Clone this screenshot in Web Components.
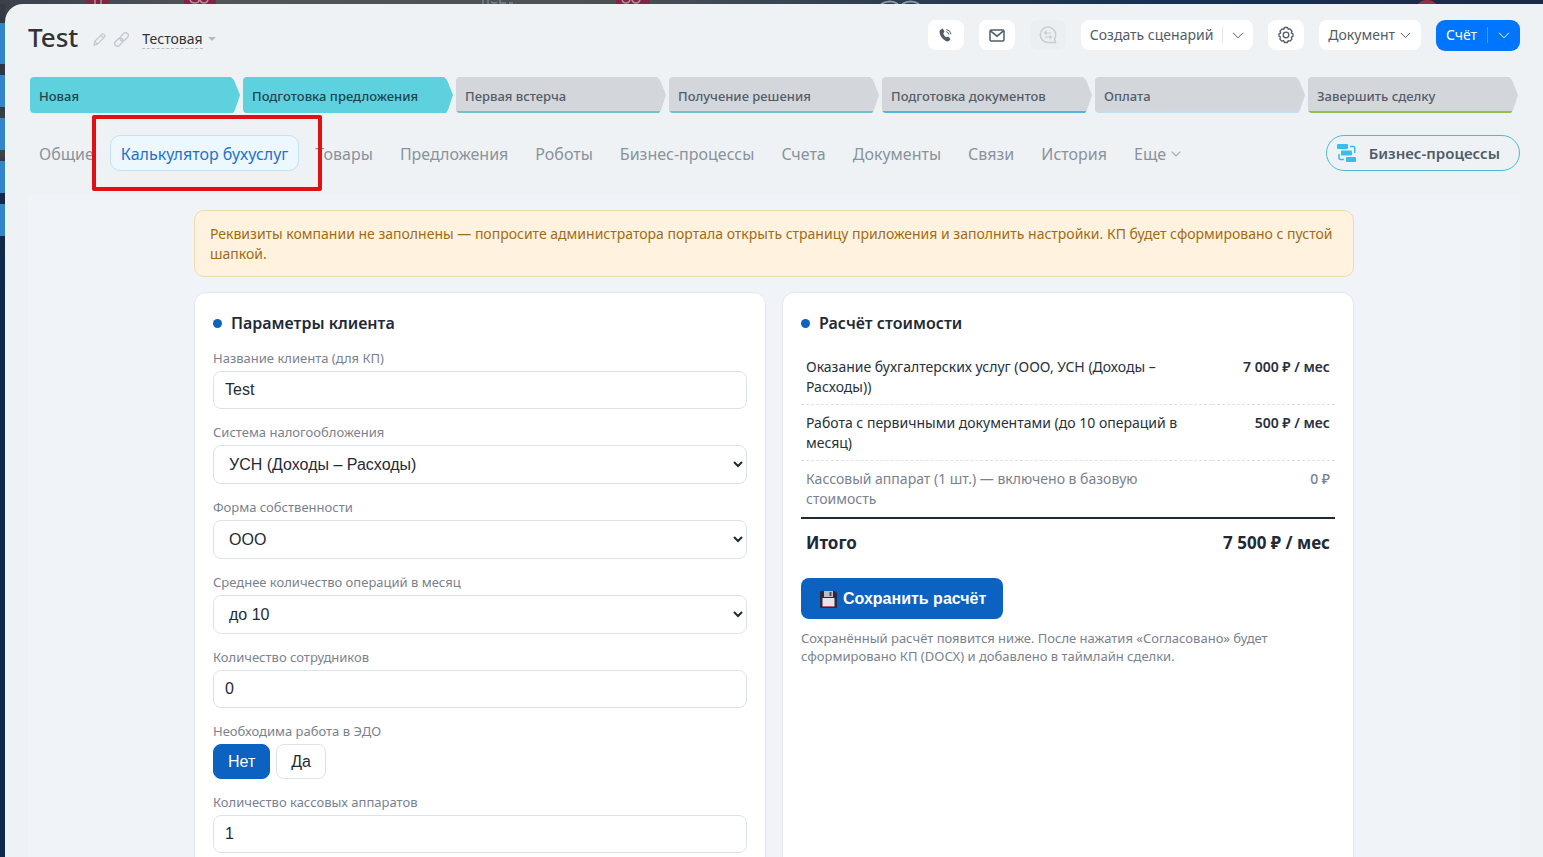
<!DOCTYPE html>
<html lang="ru">
<head>
<meta charset="utf-8">
<meta name="viewport" content="width=device-width, initial-scale=1">
<title>Test — Калькулятор бухуслуг</title>
<style>
  html, body { margin: 0; height: 100%; overflow: hidden; }
  body { font-family: "Noto Sans", sans-serif; font-size: 14px; color: #333b44; background: #10294a; }
</style>
</head>
<body>
<crm-app></crm-app>

<template id="t-app">
  <style>
    :host { display: grid; grid-template: 4px 1fr / 5px 1fr; height: 100vh; box-sizing: border-box;
      background: linear-gradient(90deg, #3a414b 0, #50555a 14%, #4c5054 40%, #2b3d52 58%, #173152 75%, #1b2a49 100%) top / 100% 24px no-repeat, #10294a; }
    crm-backdrop-bar { grid-column: 1 / 3; }
    main { background: #eef2f5; border-top-left-radius: 18px; padding: 15px 23px 0; overflow: auto; scrollbar-width: none; }
    header { display: flex; align-items: center; justify-content: space-between; height: 32px; }
    .stages { display: grid; grid-template-columns: repeat(7, 1fr); gap: 3px; margin: 26px 2px 22px; }
    .nav { display: flex; align-items: center; justify-content: space-between; }
    nav { display: flex; gap: 5px; }
    .frame { background: #f0f3f7; margin-top: 24px; padding: 15px 16px 0; min-height: 662px; box-sizing: border-box; }
    .wrap { max-width: 1160px; margin: 0 auto; }
    .cols { display: grid; grid-template-columns: 1fr 1fr; gap: 16px; margin-top: 15px; }
  </style>
  <crm-backdrop-bar></crm-backdrop-bar>
  <crm-backdrop-rail></crm-backdrop-rail>
  <main>
    <header>
      <crm-title></crm-title>
      <crm-toolbar></crm-toolbar>
    </header>
    <div class="stages">
      <crm-stage class="done">Новая</crm-stage>
      <crm-stage class="done">Подготовка предложения</crm-stage>
      <crm-stage style="--line:#6fc3cc">Первая встерча</crm-stage>
      <crm-stage style="--line:#6fc3cc">Получение решения</crm-stage>
      <crm-stage style="--line:#55b5d6">Подготовка документов</crm-stage>
      <crm-stage style="--line:#bfe0ee">Оплата</crm-stage>
      <crm-stage style="--line:#8fc24b">Завершить сделку</crm-stage>
    </div>
    <div class="nav">
      <nav>
        <crm-tab>Общие</crm-tab>
        <crm-tab active>Калькулятор бухуслуг</crm-tab>
        <crm-tab>Товары</crm-tab>
        <crm-tab>Предложения</crm-tab>
        <crm-tab>Роботы</crm-tab>
        <crm-tab>Бизнес-процессы</crm-tab>
        <crm-tab>Счета</crm-tab>
        <crm-tab>Документы</crm-tab>
        <crm-tab>Связи</crm-tab>
        <crm-tab>История</crm-tab>
        <crm-tab>Еще <svg width="10" height="6" viewBox="0 0 10 6" fill="none" stroke="#a3a9b0" stroke-width="1.2"><path d="M.7.7 5 5 9.300.7"/></svg></crm-tab>
      </nav>
      <crm-process-button>Бизнес-процессы</crm-process-button>
    </div>
    <div class="frame">
      <div class="wrap">
        <crm-alert>Реквизиты компании не заполнены — попросите администратора портала открыть страницу приложения и заполнить настройки. КП будет сформировано с пустой шапкой.</crm-alert>
        <div class="cols">
          <crm-card>
            <span slot="title">Параметры клиента</span>
            <crm-field label="Название клиента (для КП)" value="Test"></crm-field>
            <crm-field label="Система налогообложения" options="УСН (Доходы – Расходы)|УСН (Доходы)|ОСНО"></crm-field>
            <crm-field label="Форма собственности" options="ООО|ИП"></crm-field>
            <crm-field label="Среднее количество операций в месяц" options="до 10|до 30|до 50"></crm-field>
            <crm-field label="Количество сотрудников" value="0"></crm-field>
            <crm-toggle label="Необходима работа в ЭДО"></crm-toggle>
            <crm-field label="Количество кассовых аппаратов" value="1"></crm-field>
          </crm-card>
          <crm-card>
            <span slot="title">Расчёт стоимости</span>
            <crm-estimate></crm-estimate>
          </crm-card>
        </div>
      </div>
    </div>
  </main>
</template>

<template id="t-backdrop-bar">
  <style>
    :host { display: block; position: relative; overflow: hidden; height: 4px; }
    svg { display: block; }
  </style>
  <svg width="1543" height="4" viewBox="0 0 1543 4" aria-hidden="true">
    <path fill="#7d2742" d="M86 0h23v4H86zM184 0h32v4h-32zM616 0h34v4h-34z"/>
    <path stroke="#b98a9a" stroke-width="1.500" fill="none" d="M95 0v4M101 0v4M190 0q1 3 5 3t4-3M200 0q1 3 4 3t4-3M622 0q1 3 4 3t4-3M632 0q1 3 4 3t4-3"/>
    <path stroke="#74828f" stroke-width="1.500" fill="none" d="M483 0v4M488 0v4M491 2q4 2 6 0M500 0v3h6M509 3h4"/>
    <path stroke="#8b99a8" stroke-width="2" fill="none" d="M881 4q9-5 17 0M902 4q9-5 17 0"/>
    <path fill="#9c2c41" d="M1418 4q3-4 9-4t9 4z"/>
  </svg>
</template>

<template id="t-backdrop-rail">
  <style>
    :host { display: grid; grid-template-rows: 41px repeat(4, 32px); gap: 11px; align-content: start; padding-top: 19px;
      background: linear-gradient(#343b45 0, #2d3743 60px, #3f4446 150px, #14284a 170px, #10294a 300px); }
    i { background: #3384c8; }
  </style>
  <i></i><i></i><i></i><i></i><i></i>
</template>

<template id="t-title">
  <style>
    :host { display: flex; align-items: center; }
    h1 { margin: 0 15px 0 0; font-size: 26px; line-height: 32px; font-weight: 500; color: #333; padding-top: 4px; }
    svg { margin: 8px 8px 0 0; }
    a { margin: 8px 5px 0 5px; font-size: 14px; line-height: 18px; color: #333; text-decoration: none; border-bottom: 1px dashed #b9bfc5; }
    i { margin-top: 7px; border: 4px solid transparent; border-top-color: #b5bbc1; border-bottom: 0; }
  </style>
  <h1>Test</h1>
  <svg width="13" height="13" viewBox="0 0 13 13" fill="none" stroke="#c3c8cc" stroke-width="1.2"><path d="M1 12l.8-3.600L9 1.300q.9-.7 1.800.1l.8.8q.8.9 0 1.700L4.500 11.100zM8 2.300l2.700 2.700M1.900 8.600l2.500 2.400"/></svg>
  <svg width="15" height="15" viewBox="0 0 15 15" fill="none" stroke="#c3c8cc" stroke-width="1.300"><g transform="rotate(-45 7.500 7.500)"><rect x="-1" y="4.800" width="9.500" height="5.400" rx="2.700"/><rect x="6.500" y="4.800" width="9.500" height="5.400" rx="2.700"/></g></svg>
  <a href="#">Тестовая</a><i></i>
</template>

<template id="t-toolbar">
  <style>
    :host { display: flex; align-items: center; gap: 15px; }
    button { font: inherit; font-size: 14px; line-height: 18px; color: #525c69; border: 0; background: #fff; border-radius: 8px; height: 30px; padding: 0; display: flex; align-items: center; justify-content: center; }
    .sq { width: 36px; }
    .off { background: #ebeff2; }
    .split i { width: 1px; height: 16px; background: #e3e6e9; margin: 0 10px; }
    .split { padding: 0 9px; }
    .split.wide i { margin: 0 9px; }
    .doc { padding: 0 10px 0 9px; gap: 5px; }
    .main { background: #0075ff; color: #fff; height: 31px; border-radius: 9px; padding: 0 10px; }
    .main i { background: #4a9bff; }
  </style>
  <button class="sq" aria-label="Позвонить"><svg width="16" height="16" viewBox="0 0 16 16"><path fill="#525c69" d="M2 3.200 4 1.700q.8-.3 1.200.5l1.100 2q.3.7-.3 1.200l-.8.8q.7 2.600 3 4.100l1-.6q.7-.4 1.200.1l1.700 1.600q.6.7 0 1.300l-1.400 1.400q-1.400.8-3-.1Q2.300 10.800 1.500 5q0-1.200.5-1.800z"/><path fill="none" stroke="#525c69" d="M8.300 4.700q2.200.5 2.500 2.800M8.500 2.600q3.900.5 4.500 4.700"/></svg></button>
  <button class="sq" aria-label="Письмо"><svg width="16" height="13" viewBox="0 0 16 13" fill="none" stroke="#525c69" stroke-width="1.500"><rect x="1" y="1" width="14" height="11" rx="1.200"/><path d="M1.500 1.800 8 7.200l6.500-5.400"/></svg></button>
  <button class="sq off" aria-label="Чат" disabled><svg width="18" height="18" viewBox="0 0 18 18" fill="none" stroke="#c9cdd2" stroke-width="1.500"><path d="M16.500 16.500H9A7.700 7.700 0 1 1 16.700 9q0 2.500-1.300 4.400z"/><path stroke-width="1.200" d="M5.500 7h7M7.500 5l-2 2 2 1.500M12.500 11h-7M10.500 9.500l2 1.500-2 2"/></svg></button>
  <button class="split wide">Создать сценарий<i></i><svg width="12" height="7" viewBox="0 0 12 7" fill="none" stroke="#525c69"><path d="M1 .8l5 5 5-5"/></svg></button>
  <button class="sq" aria-label="Настройки"><svg width="18" height="18" viewBox="0 0 18 18" fill="none" stroke="#525c69" stroke-width="1.300" stroke-linejoin="round"><path d="M7.400 1.500h3.200l.6 1.900 1.700-.5 2.100 2.300-.7 1.800 1.700.9v2.400l-1.700.8.6 2-2 2.100-1.800-.5-.7 1.800H7.400l-.7-1.800-1.800.5-2-2.100.6-2L2 10.300V7.900L3.700 7 3 5.200l2.100-2.300 1.700.5z"/><circle cx="9" cy="9" r="2.800"/></svg></button>
  <button class="doc">Документ<svg width="11" height="7" viewBox="0 0 11 7" fill="none" stroke="#525c69"><path d="M.8.9l4.700 4.700L10.200.9"/></svg></button>
  <button class="split main">Счёт<i></i><svg width="12" height="7" viewBox="0 0 12 7" fill="none" stroke="#fff"><path d="M1 .8l5 5 5-5"/></svg></button>
</template>

<template id="t-stage">
  <style>
    :host { display: flex; align-items: center; height: 36px; box-sizing: border-box; padding: 2px 9px 0; border-radius: 4px 0 0 4px;
      background: linear-gradient(var(--line), var(--line)) bottom / 100% 2px no-repeat, #d3d7dc; font-size: 13px; font-weight: 500; color: #535c69; white-space: nowrap;
      clip-path: polygon(0 0, calc(100% - 9px) 0, calc(100% - 6px) 3px, 100% 50%, calc(100% - 5px) calc(100% - 3px), calc(100% - 7px) 100%, 0 100%); }
    :host(.done) { --line: #5dd1de; background: #5dd1de; color: #22444c; }
  </style>
  <slot></slot>
</template>

<template id="t-tab">
  <style>
    :host { display: block; position: relative; }
    a { display: flex; align-items: center; gap: 5px; height: 36px; box-sizing: border-box; padding: 2px 10px 0; border: 1px solid transparent; border-radius: 10px; font-size: 16px; color: #8a929b; text-decoration: none; white-space: nowrap; }
    :host([active]) a { background: #edf7fe; border-color: #c3e2f8; color: #1e72cf; }
    .mark { display: none; }
    :host([active]) .mark { display: block; position: absolute; z-index: 1; inset: -20px -23px -20px -18px; border: 4px solid #e01015; border-radius: 2px; pointer-events: none; }
  </style>
  <a href="#"><slot></slot></a><div class="mark"></div>
</template>

<template id="t-process-button">
  <style>
    :host { display: block; }
    button { display: flex; align-items: center; gap: 12px; height: 36px; padding: 0 19px 0 10px; border: 1px solid #4cb9dc; border-radius: 18px; background: none; font: inherit; font-size: 15px; font-weight: 600; color: #525c69; white-space: nowrap; }
  </style>
  <button><svg width="20" height="18" viewBox="0 0 20 18"><g fill="#36bfe8"><rect x="0" y="0" width="11" height="5" rx="1"/><rect x="4" y="6.500" width="11" height="5" rx="1"/><rect x="9" y="13" width="10" height="5" rx="1"/></g><path fill="none" stroke="#36bfe8" stroke-width="1.500" d="M13 2.500h3.500q1.300 0 1.300 1.300V9M2 10v4q0 1.500 1.500 1.500H7"/></svg><slot></slot></button>
</template>

<template id="t-alert">
  <style>
    :host { display: block; padding: 13px 15px 12px; border: 1px solid #f0dcab; border-radius: 10px; background: #fff3df; color: #a36a14; font-size: 14px; line-height: 20px; }
  </style>
  <slot></slot>
</template>

<template id="t-card">
  <style>
    :host { display: block; min-width: 0; background: #fff; border: 1px solid #e2e7ee; border-radius: 12px; padding: 18px 18px 24px; }
    h2 { display: flex; align-items: center; gap: 9px; margin: 0 0 14px; font-size: 16px; line-height: 24px; font-weight: 600; color: #1f2a37; }
    h2::before { content: ""; width: 9px; height: 9px; border-radius: 50%; background: #0f62bd; }
    .body { display: grid; gap: 14px; }
  </style>
  <h2><slot name="title"></slot></h2>
  <div class="body"><slot></slot></div>
</template>

<template id="t-field">
  <style>
    :host { display: block; }
    label { display: block; margin-bottom: 4px; font-size: 13px; line-height: 18px; color: #7a828f; }
    input, select { display: block; width: 100%; box-sizing: border-box; height: 38px; padding: 0 11px; border: 1px solid #dde3ea; border-radius: 8px; background: #fff; font: 16px "Liberation Sans", sans-serif; color: #1f2a37; }
    select { height: 39px; }
  </style>
  <label for="c"></label>
</template>

<template id="t-toggle">
  <style>
    :host { display: block; }
    .l { margin-bottom: 4px; font-size: 13px; line-height: 18px; color: #7a828f; }
    .row { display: flex; gap: 6px; }
    button { height: 35px; padding: 0 14px; border: 1px solid #dde3ea; border-radius: 8px; background: #fff; font: 16px "Liberation Sans", sans-serif; color: #1f2a37; }
    button[aria-pressed=true] { background: #0b62c1; border-color: #0b62c1; color: #fff; }
  </style>
  <div class="l" id="l"></div>
  <div class="row" role="group" aria-labelledby="l"><button aria-pressed="true">Нет</button><button aria-pressed="false">Да</button></div>
</template>

<template id="t-estimate">
  <style>
    :host { display: block; }
    table { width: 100%; border-collapse: separate; border-spacing: 0; table-layout: fixed; font-size: 14px; line-height: 20px; color: #27313d; }
    td, th { padding: 8px 5px 7px; vertical-align: top; text-align: left; font-weight: 400; }
    tbody tr:not(:last-child) > * { border-bottom: 1px dashed #dfe4ea; }
    col:first-child { width: 77%; }
    td { text-align: right; font-weight: 600; white-space: nowrap; }
    .muted { color: #7a828f; }
    .muted > * { padding-bottom: 8px; }
    .muted td { font-weight: 500; }
    tfoot > tr > * { border-top: 2px solid #1f2a37; padding: 12px 5px; font-size: 17px; line-height: 24px; font-weight: 700; color: #1f2a37; }
    button { display: flex; align-items: center; gap: 5px; height: 41px; margin-top: 11px; padding: 0 17px 0 18px; border: 0; border-radius: 8px; background: #0b62c1; color: #fff; font: bold 16px "Liberation Sans", sans-serif; }
    p { margin: 10px 0 0; max-width: 500px; font-size: 13px; line-height: 18px; color: #7a828f; }
  </style>
  <table>
    <colgroup><col><col></colgroup>
    <tbody>
      <tr><th scope="row">Оказание бухгалтерских услуг (ООО, УСН (Доходы – Расходы))</th><td>7 000 ₽ / мес</td></tr>
      <tr><th scope="row">Работа с первичными документами (до 10 операций в месяц)</th><td>500 ₽ / мес</td></tr>
      <tr class="muted"><th scope="row">Кассовый аппарат (1 шт.) — включено в базовую стоимость</th><td>0 ₽</td></tr>
    </tbody>
    <tfoot><tr><th scope="row">Итого</th><td>7 500 ₽ / мес</td></tr></tfoot>
  </table>
  <button><svg width="19" height="18" viewBox="0 0 19 18"><path fill="#2e2a3c" d="M2 1h14l2 2v14q0 1-1 1H2q-1 0-1-1V2q0-1 1-1z"/><path fill="#b9bcc6" d="M5 1h9v6H5z"/><path fill="#4c4a5e" d="M10.500 2h2v4h-2z"/><path fill="#e6e3e9" d="M3.500 8h12v8h-12z"/><path fill="#c2547c" d="M3.500 16h12v1h-12z"/></svg>Сохранить расчёт</button>
  <p>Сохранённый расчёт появится ниже. После нажатия «Согласовано» будет сформировано КП (DOCX) и добавлено в таймлайн сделки.</p>
</template>

<script>
  class Base extends HTMLElement {
    constructor() {
      super();
      const t = document.getElementById('t-' + this.localName.replace('crm-', ''));
      this.attachShadow({ mode: 'open' }).append(t.content.cloneNode(true));
    }
  }
  for (const n of ['backdrop-bar', 'backdrop-rail', 'title', 'toolbar', 'stage', 'tab', 'process-button', 'alert', 'card', 'estimate'])
    customElements.define('crm-' + n, class extends Base {});

  customElements.define('crm-field', class extends Base {
    connectedCallback() {
      const options = this.getAttribute('options');
      const control = document.createElement(options ? 'select' : 'input');
      control.id = 'c';
      if (options) options.split('|').forEach(o => control.add(new Option(o)));
      else control.value = this.getAttribute('value');
      this.shadowRoot.querySelector('label').textContent = this.getAttribute('label');
      this.shadowRoot.append(control);
    }
  });

  customElements.define('crm-toggle', class extends Base {
    connectedCallback() {
      this.shadowRoot.getElementById('l').textContent = this.getAttribute('label');
      const buttons = this.shadowRoot.querySelectorAll('button');
      buttons.forEach(b => b.onclick = () => buttons.forEach(x => x.setAttribute('aria-pressed', x === b)));
    }
  });

  customElements.define('crm-app', class extends Base {});
</script>
</body>
</html>
